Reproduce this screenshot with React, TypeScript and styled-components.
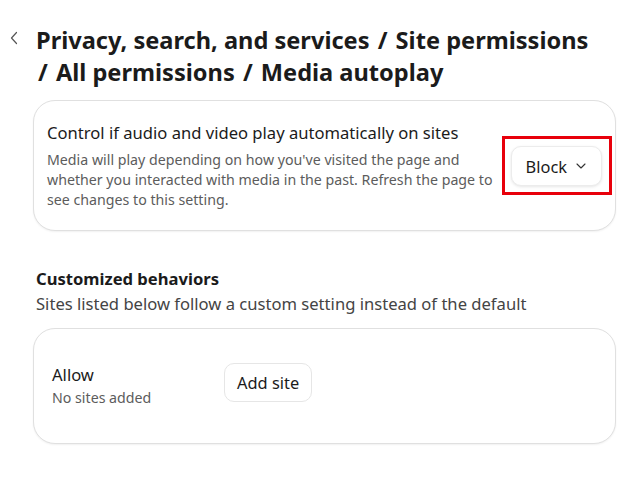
import React from "react";
import styled, { createGlobalStyle } from "styled-components";

const Global = createGlobalStyle`
  html, body { margin: 0; padding: 0; background: #ffffff; }
  body { font-family: "Noto Sans", "Open Sans", sans-serif; color: #1a1a1a; }
`;

const Page = styled.div`
  width: 640px;
  height: 480px;
  overflow: hidden;
  box-sizing: border-box;
  padding: 24px 24px 0 10px;
`;

const Header = styled.div`
  display: flex;
  align-items: flex-start;
  gap: 18px;
`;

const BackButton = styled.button`
  border: none;
  background: transparent;
  padding: 0;
  width: 8px;
  height: 28px;
  display: flex;
  align-items: center;
  justify-content: center;
  flex-shrink: 0;
`;

const Title = styled.h1`
  margin: 0;
  font-size: 23.6px;
  line-height: 32px;
  font-weight: 700;
  color: #1b1b1b;
`;

const Sep = styled.span`
  padding: 0 2px;
`;

const Body = styled.div`
  padding-left: 23px;
  display: flex;
  flex-direction: column;
`;

const Card = styled.div<{ $pad: string; $height: number; $align: string; $mt: number }>`
  margin-top: ${(p) => p.$mt}px;
  border: 1px solid #e0e0e0;
  border-radius: 22px;
  box-shadow: 0 1px 2px rgba(0, 0, 0, 0.06);
  background: #fff;
  padding: ${(p) => p.$pad};
  height: ${(p) => p.$height}px;
  box-sizing: border-box;
  display: flex;
  align-items: ${(p) => p.$align};
`;

const TextCol = styled.div`
  flex: 1;
  display: flex;
  flex-direction: column;
`;

const MainLabel = styled.div`
  font-size: 16.6px;
  line-height: 22px;
  color: #1b1b1b;
`;

const SubLabel = styled.div`
  font-size: 14.2px;
  line-height: 20px;
  color: #5c5c5c;
  margin-top: 6px;
  max-width: 450px;
`;

const Highlight = styled.div`
  border: 3px solid #e8000b;
  padding: 7px 7px 6px 6px;
  margin-left: 8px;
  display: flex;
`;

const SelectButton = styled.button`
  display: flex;
  align-items: center;
  gap: 9px;
  height: 40px;
  padding: 0 15px 0 14px;
  border: 1px solid #ececec;
  border-radius: 10px;
  background: #fff;
  box-shadow: 0 1px 3px rgba(0, 0, 0, 0.1);
  font-family: inherit;
  font-size: 16.4px;
  color: #1b1b1b;
`;

const SectionTitle = styled.div`
  margin-top: 37px;
  padding-left: 3px;
  font-size: 16.6px;
  font-weight: 700;
  line-height: 22px;
  color: #1b1b1b;
`;

const SectionSub = styled.div`
  margin-top: 3px;
  padding-left: 3px;
  font-size: 16.6px;
  line-height: 22px;
  color: #444;
`;

const AllowCol = styled.div`
  width: 172px;
  margin-top: 1px;
  display: flex;
  flex-direction: column;
`;

const AllowSub = styled.div`
  margin-top: 2px;
  font-size: 14.2px;
  line-height: 20px;
  color: #5c5c5c;
`;

const PlainButton = styled.button`
  height: 39px;
  padding: 0 12px;
  border: 1px solid #e6e6e6;
  border-radius: 10px;
  background: #fff;
  font-family: inherit;
  font-size: 16.4px;
  color: #1b1b1b;
`;

const Chevron = () => (
  <svg width="10" height="6" viewBox="0 0 10 6" fill="none">
    <path d="M1 1l4 4 4-4" stroke="#333" strokeWidth="1.1" strokeLinecap="round" strokeLinejoin="round" />
  </svg>
);

const BackIcon = () => (
  <svg width="8" height="14" viewBox="0 0 8 14" fill="none">
    <path d="M6.5 1.5L1.5 7l5 5.5" stroke="#555" strokeWidth="1.2" strokeLinecap="round" strokeLinejoin="round" />
  </svg>
);

const crumbs = ["Privacy, search, and services", "Site permissions", "All permissions", "Media autoplay"];

export default function App() {
  return (
    <Page>
      <Global />
      <Header>
        <BackButton aria-label="Back">
          <BackIcon />
        </BackButton>
        <Title>
          {crumbs.map((c, i) => (
            <React.Fragment key={c}>
              {i > 0 && " "}
              {i > 0 && <Sep>/</Sep>}
              {i > 0 ? "\u00A0" + c : c}
            </React.Fragment>
          ))}
        </Title>
      </Header>
      <Body>
        <Card $pad="0 3px 0 13px" $height={131} $align="center" $mt={12}>
          <TextCol>
            <MainLabel>Control if audio and video play automatically on sites</MainLabel>
            <SubLabel>
              Media will play depending on how you've visited the page and whether you interacted with media in the past. Refresh the page to see changes to this setting.
            </SubLabel>
          </TextCol>
          <Highlight>
            <SelectButton>
              Block
              <Chevron />
            </SelectButton>
          </Highlight>
        </Card>
        <SectionTitle>Customized behaviors</SectionTitle>
        <SectionSub>Sites listed below follow a custom setting instead of the default</SectionSub>
        <Card $pad="34px 18px 0 18px" $height={116} $align="flex-start" $mt={13}>
          <AllowCol>
            <MainLabel>Allow</MainLabel>
            <AllowSub>No sites added</AllowSub>
          </AllowCol>
          <PlainButton>Add site</PlainButton>
        </Card>
      </Body>
    </Page>
  );
}
